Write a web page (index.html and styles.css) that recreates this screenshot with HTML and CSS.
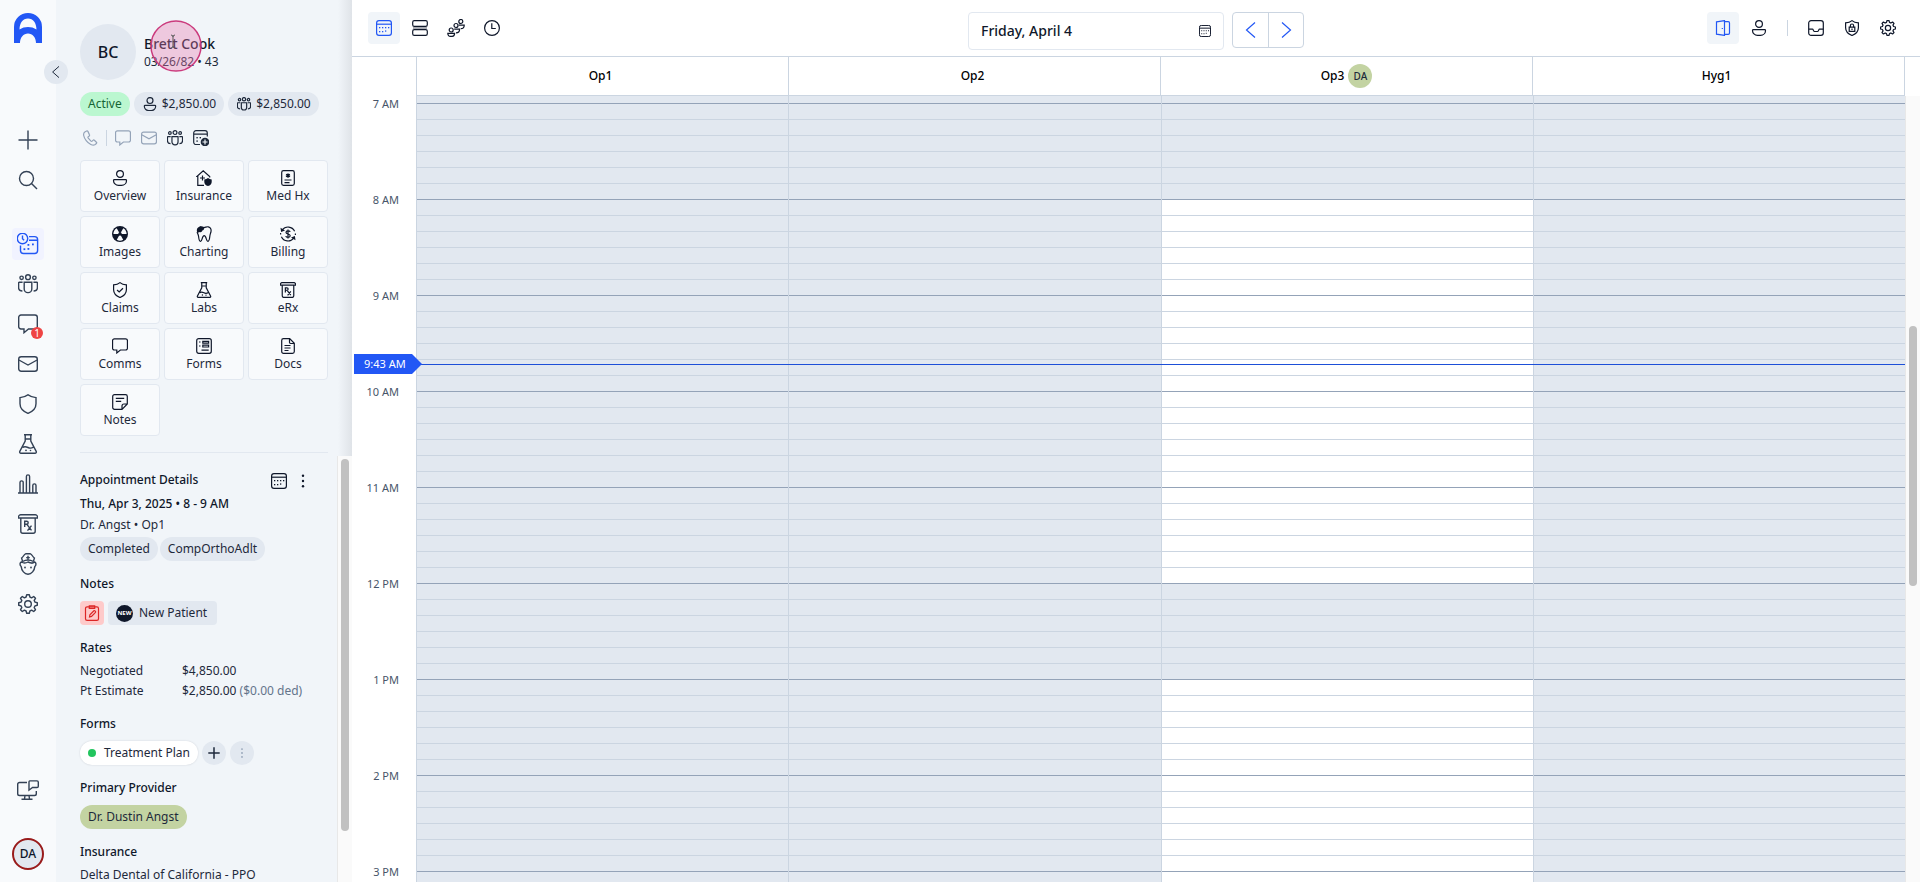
FILE: index.html
```html
<!DOCTYPE html>
<html lang="en">
<head>
    <meta charset="UTF-8">
    <meta name="viewport" content="width=device-width, initial-scale=1.0">
    <title>Schedule</title>
    <link rel="stylesheet" href="styles.css">
</head>
<body>
    <!-- Shared icons -->
    <svg class="sprite" aria-hidden="true">
        <symbol id="i-plus" viewBox="0 0 20 20"><path d="M10 .5v19M.5 10h19"/></symbol>
        <symbol id="i-search" viewBox="0 0 20 20"><circle cx="8.5" cy="8.5" r="7"/><path d="M13.5 13.5l5.5 5.5"/></symbol>
        <symbol id="i-calendar" viewBox="0 0 16 16"><rect x=".6" y=".6" width="14.8" height="14.8" rx="2.4"/><path d="M.6 4.2h14.8"/><g class="fill"><rect x="6" y="7" width="1.3" height="1.3"/><rect x="9" y="7" width="1.3" height="1.3"/><rect x="12" y="7" width="1.3" height="1.3"/><rect x="3" y="7" width="1.3" height="1.3"/><rect x="3" y="11" width="1.3" height="1.3"/><rect x="6" y="11" width="1.3" height="1.3"/><rect x="9" y="10.4" width="1.3" height="1.3"/></g></symbol>
        <symbol id="i-calendar-clock" viewBox="0 0 22 22"><circle cx="5.5" cy="5.5" r="5.2"/><path d="M5.5 2.5v3.2l1.6 1.6M12 3.600h5.600a3 3 0 0 1 3 3V17.500a3 3 0 0 1-3 3H6.500a3 3 0 0 1-3-3v-5M12 7.200h8.600"/><g class="fill"><rect x="10.500" y="11" width="1.800" height="1.800"/><rect x="15" y="10.500" width="1.800" height="1.800"/><rect x="6.500" y="15.300" width="1.800" height="1.800"/><rect x="10.500" y="15" width="1.800" height="1.800"/></g></symbol>
        <symbol id="i-group" viewBox="0 0 20 20"><circle cx="10" cy="3.2" r="2.4"/><circle cx="3.600" cy="3.800" r="1.700"/><circle cx="16.400" cy="3.800" r="1.700"/><path d="M6.200 8.200h7.600V15a3.600 3.600 0 0 1-3.600 3.600h-.4A3.600 3.600 0 0 1 6.200 15zM4.600 8.200H1.200c-.4 0-.6.300-.6.700v4.600c0 2.200 1.400 3.500 3.800 3.500M15.400 8.200h3.400c.4 0 .6.300.6.700v4.600c0 2.200-1.400 3.500-3.800 3.500"/></symbol>
        <symbol id="i-chat" viewBox="0 0 20 20"><path d="M3 1h14a2.300 2.300 0 0 1 2.300 2.300v9.400A2.300 2.300 0 0 1 17 15h-6.500L6 18.700V15H3A2.300 2.300 0 0 1 .7 12.700V3.300A2.300 2.300 0 0 1 3 1z"/></symbol>
        <symbol id="i-mail" viewBox="0 0 20 20"><rect x=".7" y="2.700" width="18.600" height="14.600" rx="2.500"/><path d="M.9 6l9.100 5 9.100-5"/></symbol>
        <symbol id="i-shield" viewBox="0 0 20 20"><path d="M10 .8c2 1.700 4.600 2.600 8 2.800v6.200c0 4.400-3 7.600-8 9.600-5-2-8-5.200-8-9.600V3.600C5.400 3.400 8 2.500 10 .8z"/></symbol>
        <symbol id="i-shield-check" viewBox="0 0 20 20"><path d="M10 .8c2 1.700 4.600 2.600 8 2.800v6.200c0 4.400-3 7.600-8 9.600-5-2-8-5.200-8-9.600V3.600C5.400 3.400 8 2.500 10 .8zM6.300 10l2.700 2.500 4.700-4.700"/></symbol>
        <symbol id="i-shield-lock" viewBox="0 0 20 20"><path d="M10 .8c2 1.700 4.600 2.600 8 2.800v6.200c0 4.400-3 7.600-8 9.600-5-2-8-5.200-8-9.600V3.600C5.400 3.400 8 2.500 10 .8z"/><rect x="6.500" y="9" width="7" height="5.200"/><path d="M8 9V7a2 2 0 0 1 4 0v2M10 10.500v2"/></symbol>
        <symbol id="i-flask" viewBox="0 0 20 20"><path d="M6 .8h8M7.400 5h5.200M7.200.8v6.400L1.800 17.400c-.5 1 .1 1.900 1.200 1.900h14c1.100 0 1.700-.9 1.200-1.900L12.800 7.200V.8M4.600 13.500c2-1.500 3.400-1 5.400 0s3.600.8 5.400-.4"/><g class="fill"><circle cx="8" cy="16.300" r=".9"/><circle cx="12.500" cy="16.500" r=".8"/></g></symbol>
        <symbol id="i-bars" viewBox="0 0 20 20"><path d="M0 19h20M2 19V8.500a1.600 1.600 0 0 1 3.200 0V19M8.400 19V2.500a1.600 1.600 0 0 1 3.200 0V19M14.800 19v-7.500a1.600 1.600 0 0 1 3.200 0V19"/></symbol>
        <symbol id="i-rx" viewBox="0 0 20 20"><path d="M.5 4V3A2.300 2.300 0 0 1 2.800.7h14.400A2.300 2.300 0 0 1 19.500 3v1zM2.800 4v13.200c0 1.200.8 2.100 2 2.100h10.400c1.200 0 2-.9 2-2.100V4M6.700 13V7.300h2a1.500 1.500 0 0 1 0 3h-2M8.900 10.400l4.600 6M13.500 11.600l-4 5"/></symbol>
        <symbol id="i-nurse" viewBox="0 0 20 22"><path d="M4.600 8.500L3.600 5c2-1.200 2.200-3.700 4-4.200h4.800c1.800.5 2 3 4 4.200l-1 3.500M4.600 8.500c3.500-2 7.300-2 10.800 0M10 2.800v3.600M8.200 4.600h3.600M3.400 9c-1.600.8-2 2.600-.2 4.600.3 4 3.300 7.600 6.800 7.600s6.500-3.600 6.800-7.600c1.800-2 1.400-3.800-.2-4.600-2.200 1.900-3.800 1.200-6.600 0-2.300 1.400-4.400 1.400-6.600 0z"/><g class="fill"><circle cx="7" cy="14.500" r=".9"/><circle cx="13" cy="14.500" r=".9"/></g></symbol>
        <symbol id="i-gear" viewBox="0 0 20 20"><circle cx="10" cy="10" r="3.300"/><path stroke-linejoin="round" d="M8.100 3L8.700.7h2.600l.6 2.300 1.700.8 2.100-1.300 1.800 1.800-1.300 2.100.8 1.700 2.300.6v2.600l-2.300.6-.8 1.700 1.300 2.100-1.800 1.800-2.100-1.300-1.700.8-.6 2.300H8.700L8.100 17l-1.700-.8-2.100 1.300-1.800-1.800 1.300-2.100L3 11.900l-2.300-.6V8.700L3 8.100l.8-1.700-1.300-2.100 1.800-1.800 2.100 1.300z"/></symbol>
        <symbol id="i-monitor" viewBox="0 0 22 20"><path d="M10 2.500H2.500A1.800 1.800 0 0 0 .7 4.300v9.400c0 1 .8 1.800 1.800 1.800h15c1 0 1.800-.8 1.800-1.800V11M8 15.500l-.5 3.500M12 15.500l.5 3.500M4.500 19.200h11M12.800.9h7.200c.8 0 1.300.5 1.300 1.300v4c0 .8-.5 1.300-1.300 1.300h-4.500L12 10.200V2.200c0-.8.2-1.300.8-1.300z"/></symbol>
        <symbol id="i-person" viewBox="0 0 16 16"><circle cx="8" cy="4" r="3.400"/><path d="M2.400 9.600h11.200c.6 0 .9.300.9.800 0 2.800-2.200 5-5 5h-3c-2.800 0-5-2.200-5-5 0-.5.300-.8.900-.8z"/></symbol>
        <symbol id="i-phone" viewBox="0 0 16 16"><path d="M4.600 1L2.800 2C.8 3.400 1.400 7 4.200 10.600S10.800 16 12.800 14.800l1.600-1.300c.4-.4.4-.9 0-1.300l-2-1.900c-.5-.4-1-.4-1.400 0l-.8.8c-.5.4-1 .3-1.500-.2L6.300 8.200c-.5-.6-.5-1.100 0-1.500l.9-.7c.4-.4.5-.9.2-1.400L5.900 1.400C5.600.9 5.100.8 4.600 1z"/></symbol>
        <symbol id="i-calendar-plus" viewBox="0 0 16 16"><path d="M7 14.500H3A2.300 2.300 0 0 1 .7 12.200V3A2.300 2.300 0 0 1 3 .7h9A2.300 2.300 0 0 1 14.300 3v3.500M.7 4.200h13.600"/><g class="fill"><rect x="3.400" y="7" width="1.400" height="1.400"/><rect x="6.600" y="7" width="1.400" height="1.400"/><rect x="3.400" y="10.400" width="1.400" height="1.400"/><circle cx="12" cy="12" r="4.300"/></g><path class="knock" d="M12 9.500v5M9.500 12h5"/></symbol>
        <symbol id="i-house" viewBox="0 0 16 16"><path d="M8 15.300H1.800V6.500H.8L7.200.9l6.500 5.600v1M6.500 5.500v5M4 8h5"/><path class="fill" d="M12 8c1.200.9 2.300 1.300 3.700 1.400v2.500c0 2-1.300 3.300-3.700 4.100-2.400-.8-3.700-2.100-3.700-4.100V9.400C9.700 9.300 10.800 8.900 12 8z"/></symbol>
        <symbol id="i-medhx" viewBox="0 0 16 16"><rect x="1.700" y=".7" width="12.600" height="14.600" rx="1.800"/><path d="M4.500 10h7M4.500 12.600h5"/><path d="M8 3.500v4.200M6 4.500l4 2.200M10 4.500L6 6.700" stroke-width="1.500"/></symbol>
        <symbol id="i-xray" viewBox="0 0 16 16"><circle class="fill" cx="8" cy="8" r="8"/><path class="blank" d="M8 8l3.200 5.800a6.600 6.600 0 0 1-6.400 0zM8 8l3.300-5.700A6.600 6.600 0 0 1 14.600 8zM8 8L4.700 2.300A6.600 6.600 0 0 0 1.400 8z"/><circle class="fill" cx="8" cy="8" r="1.800"/></symbol>
        <symbol id="i-tooth" viewBox="0 0 16 16"><path d="M3.800.8C5.600.4 6.500 1.600 8 1.600S10.600.4 12.300.8c2.400.6 3.200 2.900 2.600 5.200-.4 1.600-.9 2.600-1.100 4.500-.2 2-.5 4.600-1.900 4.800-1.800.2-1.400-5.600-3.700-5.600-2.400 0-1.800 5.800-3.700 5.600-1.500-.2-1.700-2.800-1.900-4.800C2.400 8.600 1.500 7.600 1.100 6"/><path class="fill" d="M4 .5c2-.3 3 1 4 1.300.7 1.500-.6 2.500-1.700 2.700-.2 1.600-1.700 2-2.800 1.500C2.600 6.900 1.400 6.700 1 6 .3 3.200 1.600.9 4 .5z"/></symbol>
        <symbol id="i-billing" viewBox="0 0 16 16"><path d="M2.300 3.900A7.200 7.200 0 0 1 14.600 5.200M13.700 12.100A7.200 7.200 0 0 1 1.400 10.800M.6 7v1.500M15.400 7.500V9M10.200 5.900C9.700 4.500 6 4.400 6 6.400s4.200 1.200 4.200 3.300-3.900 2-4.500.4M8 3.500v9"/><path class="fill" d="M.5 1.800l.6 4.300 3.900-1.600zM15.500 14.200l-.6-4.300-3.900 1.600z"/></symbol>
        <symbol id="i-form" viewBox="0 0 16 16"><rect x=".7" y=".7" width="14.600" height="14.600" rx="2"/><path d="M3 4h1.500M3 8h1.500M6.800 3.300h5.800v1.800H6.800zM6.800 7.200h5.800V9H6.800zM5.500 12.200h7.200"/></symbol>
        <symbol id="i-doc" viewBox="0 0 16 16"><path d="M3.500.7h6.200l4.600 4.600v8.200c0 1-.8 1.800-1.800 1.800h-9c-1 0-1.800-.8-1.800-1.800v-11C1.700 1.500 2.500.7 3.500.7zM9.500.9v3.400c0 .8.400 1.200 1.200 1.200h3.400M4.500 7.500h6M4.500 10h6M4.500 12.500h4"/></symbol>
        <symbol id="i-note" viewBox="0 0 16 16"><path d="M10 15.300H2.500C1.500 15.300.7 14.500.7 13.500v-11c0-1 .8-1.800 1.800-1.800h11c1 0 1.800.8 1.800 1.800V10zM10 15.300V12c0-1.300.7-2 2-2h3.300M3.800 4.300h8.400M3.800 7.300h5.400"/></symbol>
        <symbol id="i-dots" viewBox="0 0 16 16"><g class="fill"><circle cx="8" cy="2.800" r="1.200"/><circle cx="8" cy="8" r="1.200"/><circle cx="8" cy="13.200" r="1.200"/></g></symbol>
        <symbol id="i-clipboard" viewBox="0 0 16 16"><rect x="1.500" y="1.800" width="13" height="13.500" rx="1.600"/><path d="M5.300.8h5.400v2.500H5.300zM5.500 12l.4-2.200 4-4c.8-.6 2.200.8 1.600 1.600l-4 4z"/></symbol>
        <symbol id="i-rows" viewBox="0 0 16 16"><rect x=".7" y=".7" width="14.600" height="5.600" rx="1.600"/><rect x=".7" y="9.700" width="14.600" height="5.600" rx="1.600"/><path d="M1 8h14" opacity=".6"/></symbol>
        <symbol id="i-queue" viewBox="0 0 18 18"><circle cx="13.800" cy="2.500" r="2"/><circle cx="9" cy="6.500" r="2"/><circle cx="4.200" cy="11" r="2"/><path d="M.8 14.300h6.800c0 2-1.200 3-2.400 3h-2c-1.200 0-2.400-1-2.400-3zM7.200 10.200h5.400c0 2.300-1.200 3.600-3.600 3.600M11.700 6.200h5.500c0 2.300-1 3.500-3.400 3.500"/></symbol>
        <symbol id="i-clock" viewBox="0 0 16 16"><circle cx="8" cy="8" r="7.400"/><path d="M7.800 3.200v5.300h4"/></symbol>
        <symbol id="i-door" viewBox="0 0 16 16"><path d="M1.500 1.800l8-1.200v14.800l-8-1.200zM9.500 1.600h3.700c.8 0 1.300.5 1.300 1.300v10.200c0 .8-.5 1.300-1.300 1.300H9.500M6.700 8.500h1.200"/></symbol>
        <symbol id="i-inbox" viewBox="0 0 16 16"><rect x=".7" y=".7" width="14.600" height="14.600" rx="2.400"/><path d="M.7 9.200h3.800c.8 0 1 2.300 2 2.300h3c1 0 1.200-2.300 2-2.300h3.800"/></symbol>
        <symbol id="i-left" viewBox="0 0 16 16"><path d="M12 .5L3.500 8l8.500 7.500"/></symbol>
        <symbol id="i-right" viewBox="0 0 16 16"><path d="M4 .5L12.500 8 4 15.500"/></symbol>
    </svg>

    <div class="app">
        <nav class="rail" aria-label="Main">
            <a class="logo" href="#" aria-label="Home">
                <svg viewBox="0 0 28 30"><path fill="#2257f5" fill-rule="evenodd" d="M0 30V14a14 14 0 0 1 28 0v16h-6c0-5.500-3.500-9.500-8-9.500S6 24.500 6 30zM5.500 16.500c5-3.300 12-3.300 17 0C22.300 9.800 19.200 5.500 14 5.500S5.700 9.800 5.500 16.500z"/></svg>
            </a>
            <div class="rail-group">
                <button class="icon-btn" aria-label="Add"><svg class="icon icon-lg"><use href="#i-plus"/></svg></button>
                <button class="icon-btn" aria-label="Search"><svg class="icon icon-lg"><use href="#i-search"/></svg></button>
            </div>
            <div class="rail-group rail-main">
                <a class="icon-btn active" href="#" aria-label="Schedule"><svg class="icon icon-xl"><use href="#i-calendar-clock"/></svg></a>
                <a class="icon-btn" href="#" aria-label="Patients"><svg class="icon icon-lg"><use href="#i-group"/></svg></a>
                <a class="icon-btn" href="#" aria-label="Messages"><svg class="icon icon-lg"><use href="#i-chat"/></svg><span class="badge">1</span></a>
                <a class="icon-btn" href="#" aria-label="Mail"><svg class="icon icon-lg"><use href="#i-mail"/></svg></a>
                <a class="icon-btn" href="#" aria-label="Claims"><svg class="icon icon-lg"><use href="#i-shield"/></svg></a>
                <a class="icon-btn" href="#" aria-label="Labs"><svg class="icon icon-lg"><use href="#i-flask"/></svg></a>
                <a class="icon-btn" href="#" aria-label="Reports"><svg class="icon icon-lg"><use href="#i-bars"/></svg></a>
                <a class="icon-btn" href="#" aria-label="eRx"><svg class="icon icon-lg"><use href="#i-rx"/></svg></a>
                <a class="icon-btn" href="#" aria-label="Hygiene"><svg class="icon icon-xl"><use href="#i-nurse"/></svg></a>
                <a class="icon-btn" href="#" aria-label="Settings"><svg class="icon icon-lg"><use href="#i-gear"/></svg></a>
            </div>
            <div class="rail-bottom">
                <button class="icon-btn" aria-label="Devices"><svg class="icon icon-xl"><use href="#i-monitor"/></svg></button>
                <button class="user">DA</button>
            </div>
        </nav>

        <aside class="panel">
            <button class="collapse" aria-label="Collapse"><svg class="icon icon-sm"><use href="#i-left"/></svg></button>
            <div class="panel-top">
                <div class="patient">
                    <div class="avatar">BC</div>
                    <div>
                        <h1 class="patient-name">Brett Cook</h1>
                        <p class="patient-info">03/26/82 • 43</p>
                    </div>
                    <svg class="pointer" viewBox="0 0 52 52" aria-hidden="true">
                        <circle cx="26" cy="26" r="25" fill="#e879b0" fill-opacity=".36" stroke="#cb3b7d" stroke-width="1.5"/>
                        <path d="M21 15q2 0 2 2v9q0 2-2 2M25 15q-2 0-2 2M25 28q-2 0-2-2" fill="none" stroke="#555"/>
                    </svg>
                </div>
                <div class="balances">
                    <span class="pill pill-active">Active</span>
                    <span class="pill"><svg class="icon"><use href="#i-person"/></svg>$2,850.00</span>
                    <span class="pill"><svg class="icon"><use href="#i-group"/></svg>$2,850.00</span>
                </div>
                <div class="contact">
                    <button class="muted" aria-label="Call"><svg class="icon"><use href="#i-phone"/></svg></button>
                    <span class="sep"></span>
                    <button class="muted" aria-label="Text"><svg class="icon"><use href="#i-chat"/></svg></button>
                    <button class="muted" aria-label="Email"><svg class="icon"><use href="#i-mail"/></svg></button>
                    <button aria-label="Family"><svg class="icon"><use href="#i-group"/></svg></button>
                    <button aria-label="Add appointment"><svg class="icon"><use href="#i-calendar-plus"/></svg></button>
                </div>
                <div class="tiles">
                    <button class="tile"><svg class="icon"><use href="#i-person"/></svg>Overview</button>
                    <button class="tile"><svg class="icon"><use href="#i-house"/></svg>Insurance</button>
                    <button class="tile"><svg class="icon"><use href="#i-medhx"/></svg>Med Hx</button>
                    <button class="tile"><svg class="icon"><use href="#i-xray"/></svg>Images</button>
                    <button class="tile"><svg class="icon"><use href="#i-tooth"/></svg>Charting</button>
                    <button class="tile"><svg class="icon"><use href="#i-billing"/></svg>Billing</button>
                    <button class="tile"><svg class="icon"><use href="#i-shield-check"/></svg>Claims</button>
                    <button class="tile"><svg class="icon"><use href="#i-flask"/></svg>Labs</button>
                    <button class="tile"><svg class="icon"><use href="#i-rx"/></svg>eRx</button>
                    <button class="tile"><svg class="icon"><use href="#i-chat"/></svg>Comms</button>
                    <button class="tile"><svg class="icon"><use href="#i-form"/></svg>Forms</button>
                    <button class="tile"><svg class="icon"><use href="#i-doc"/></svg>Docs</button>
                    <button class="tile"><svg class="icon"><use href="#i-note"/></svg>Notes</button>
                </div>
            </div>

            <div class="details">
                <div class="details-body">
                    <section>
                        <div class="details-head">
                            <h2>Appointment Details</h2>
                            <button aria-label="Open in schedule"><svg class="icon"><use href="#i-calendar"/></svg></button>
                            <button aria-label="More"><svg class="icon"><use href="#i-dots"/></svg></button>
                        </div>
                        <p class="strong">Thu, Apr 3, 2025 • 8 - 9 AM</p>
                        <p>Dr. Angst • Op1</p>
                        <div class="tags">
                            <span class="pill">Completed</span>
                            <span class="pill">CompOrthoAdlt</span>
                        </div>
                    </section>
                    <section>
                        <h2>Notes</h2>
                        <div class="chips">
                            <button class="note-alert" aria-label="Note"><svg class="icon"><use href="#i-clipboard"/></svg></button>
                            <span class="chip"><span class="new">NEW</span>New Patient</span>
                        </div>
                    </section>
                    <section>
                        <h2>Rates</h2>
                        <dl class="rates">
                            <dt>Negotiated</dt>
                            <dd>$4,850.00</dd>
                            <dt>Pt Estimate</dt>
                            <dd>$2,850.00 <span class="ded">($0.00 ded)</span></dd>
                        </dl>
                    </section>
                    <section>
                        <h2>Forms</h2>
                        <div class="chips">
                            <button class="pill pill-form"><span class="dot"></span>Treatment Plan</button>
                            <button class="round" aria-label="Add form"><svg class="icon icon-sm"><use href="#i-plus"/></svg></button>
                            <button class="round muted" aria-label="More"><svg class="icon icon-sm"><use href="#i-dots"/></svg></button>
                        </div>
                    </section>
                    <section>
                        <h2>Primary Provider</h2>
                        <div class="chips">
                            <span class="pill pill-provider">Dr. Dustin Angst</span>
                        </div>
                    </section>
                    <section>
                        <h2>Insurance</h2>
                        <p>Delta Dental of California - PPO</p>
                    </section>
                </div>
                <div class="scrollbar"><div class="thumb" style="top: 0.7%; height: 87.4%"></div></div>
            </div>
        </aside>

        <main class="main">
            <header class="toolbar">
                <div class="tools">
                    <button class="icon-btn active" aria-label="Day view"><svg class="icon"><use href="#i-calendar"/></svg></button>
                    <button class="icon-btn" aria-label="List view"><svg class="icon"><use href="#i-rows"/></svg></button>
                    <button class="icon-btn" aria-label="Waitlist"><svg class="icon icon-md"><use href="#i-queue"/></svg></button>
                    <button class="icon-btn" aria-label="History"><svg class="icon"><use href="#i-clock"/></svg></button>
                </div>
                <div class="date-nav">
                    <label class="date-field">
                        <input type="text" value="Friday, April 4" aria-label="Date">
                        <svg class="icon icon-sm"><use href="#i-calendar"/></svg>
                    </label>
                    <div class="stepper">
                        <button aria-label="Previous day"><svg class="icon"><use href="#i-left"/></svg></button>
                        <button aria-label="Next day"><svg class="icon"><use href="#i-right"/></svg></button>
                    </div>
                </div>
                <div class="tools tools-right">
                    <button class="icon-btn active" aria-label="Operatories"><svg class="icon"><use href="#i-door"/></svg></button>
                    <button class="icon-btn" aria-label="Providers"><svg class="icon"><use href="#i-person"/></svg></button>
                    <span class="sep"></span>
                    <button class="icon-btn" aria-label="Inbox"><svg class="icon"><use href="#i-inbox"/></svg></button>
                    <button class="icon-btn" aria-label="Security"><svg class="icon"><use href="#i-shield-lock"/></svg></button>
                    <button class="icon-btn" aria-label="Settings"><svg class="icon"><use href="#i-gear"/></svg></button>
                </div>
            </header>

            <div class="columns-head">
                <div class="column-title"><span class="column-name">Op1</span></div>
                <div class="column-title"><span class="column-name">Op2</span></div>
                <div class="column-title"><span class="column-name">Op3</span><span class="provider">DA</span></div>
                <div class="column-title"><span class="column-name">Hyg1</span></div>
            </div>

            <div class="schedule">
                <div class="grid">
                    <div class="times">
                        <div class="time">7 AM</div>
                        <div class="time">8 AM</div>
                        <div class="time">9 AM</div>
                        <div class="time">10 AM</div>
                        <div class="time">11 AM</div>
                        <div class="time">12 PM</div>
                        <div class="time">1 PM</div>
                        <div class="time">2 PM</div>
                        <div class="time">3 PM</div>
                    </div>
                    <div class="column" data-open=""></div>
                    <div class="column" data-open=""></div>
                    <div class="column" data-open="8,9,10,11,13,14,15"></div>
                    <div class="column" data-open=""></div>
                    <div class="now"><span class="now-label">9:43 AM</span></div>
                </div>
                <div class="scrollbar"><div class="thumb" style="top: 29.2%; height: 33.2%"></div></div>
            </div>
        </main>
    </div>

    <script>
        // Fill each operatory with hour blocks, open hours are white
        document.querySelectorAll('.column').forEach(column => {
            const open = column.dataset.open.split(',');
            for (let hour = 6; hour <= 15; hour++) {
                const block = document.createElement('div');
                block.className = 'hour';
                if (hour === 6) block.classList.add('partial');
                if (open.includes(String(hour))) block.classList.add('open');
                column.appendChild(block);
            }
        });
    </script>
</body>
</html>
```
FILE: styles.css
```css
* {
    margin: 0;
    padding: 0;
    box-sizing: border-box;
}

body {
    font-family: "Noto Sans", "Open Sans", sans-serif;
    font-size: 12px;
    line-height: 20px;
    color: #334155;
    background: #fff;
}

button,
input {
    font: inherit;
    color: inherit;
    background: none;
    border: none;
}

button {
    cursor: pointer;
}

a {
    color: inherit;
    text-decoration: none;
}

.sprite {
    display: none;
}

symbol * {
    vector-effect: non-scaling-stroke;
}

.icon {
    width: 16px;
    height: 16px;
    flex: none;
    display: block;
    fill: none;
    stroke: currentColor;
    stroke-width: 1.2;
    overflow: visible;
}

.icon-sm {
    width: 12px;
    height: 12px;
    stroke-width: 1;
}

.icon-md {
    width: 18px;
    height: 18px;
}

.icon-lg {
    width: 20px;
    height: 20px;
    stroke-width: 1.4;
}

.icon-xl {
    width: 22px;
    height: 22px;
    stroke-width: 1.4;
}

.fill {
    fill: currentColor;
    stroke: none;
}

.blank {
    fill: #f8fafc;
    stroke: none;
}

.knock {
    stroke: #f1f5f9;
}

.app {
    display: flex;
    height: 100vh;
    overflow: hidden;
}

/* Left rail */
.rail {
    width: 56px;
    flex: none;
    display: flex;
    flex-direction: column;
    align-items: center;
    padding: 13px 0 12px;
    background: #f8fafc;
    color: #334155;
}

.logo svg {
    display: block;
    width: 28px;
    height: 30px;
}

.rail-group {
    display: flex;
    flex-direction: column;
    gap: 8px;
    margin-top: 81px;
}

.rail-main {
    margin-top: 32px;
}

.rail-bottom {
    display: flex;
    flex-direction: column;
    align-items: center;
    gap: 32px;
    margin-top: auto;
}

.icon-btn {
    position: relative;
    display: flex;
    align-items: center;
    justify-content: center;
    width: 32px;
    height: 32px;
    border-radius: 4px;
}

.icon-btn.active {
    background: #f1f5f9;
    color: #2257f5;
}

.rail .icon-btn.active {
    background: #f1f3ff;
}

.badge {
    position: absolute;
    right: 1px;
    bottom: 1px;
    width: 12px;
    height: 12px;
    border-radius: 50%;
    background: #ef4444;
    color: #fff;
    font-size: 10px;
    line-height: 12px;
    text-align: center;
}

.user {
    width: 32px;
    height: 32px;
    border: 2px solid #991b1b;
    border-radius: 50%;
    background: #e2e8f0;
    color: #0f172a;
    font-weight: 500;
}

/* Patient panel */
.panel {
    position: relative;
    width: 296px;
    flex: none;
    display: flex;
    flex-direction: column;
    background: linear-gradient(to left, #dfe3e8, #f1f5f9 14px);
    color: #1e293b;
}

.collapse {
    position: absolute;
    top: 60px;
    left: -12px;
    width: 24px;
    height: 24px;
    display: flex;
    align-items: center;
    justify-content: center;
    border-radius: 50%;
    background: #e2e8f0;
}

.panel-top {
    margin: 0 24px;
    padding: 24px 0 16px;
    border-bottom: 1px solid #e2e8f0;
}

.patient {
    position: relative;
    display: flex;
    align-items: center;
    gap: 8px;
}

.avatar {
    width: 56px;
    height: 56px;
    border-radius: 50%;
    background: #e2e8f0;
    color: #0f172a;
    font-size: 16px;
    line-height: 56px;
    font-weight: 500;
    text-align: center;
}

.patient-name {
    font-size: 14px;
    line-height: 20px;
    font-weight: 500;
    color: #0f172a;
}

.patient-info {
    line-height: 16px;
}

.pointer {
    position: absolute;
    left: 70px;
    top: -4px;
    width: 52px;
    height: 52px;
}

.balances {
    display: flex;
    gap: 4px;
    margin-top: 12px;
}

.pill {
    display: flex;
    align-items: center;
    height: 24px;
    padding: 0 8px;
    border-radius: 12px;
    background: #e2e8f0;
    white-space: nowrap;
}

.pill .icon {
    width: 14px;
    height: 14px;
    margin: 0 5px 0 1px;
}

.pill-active {
    background: #bbf7d0;
    color: #166534;
}

.contact {
    display: flex;
    align-items: center;
    gap: 10px;
    height: 44px;
    padding-left: 2px;
}

.contact .sep {
    margin: 0 -2px;
}

.muted {
    color: #94a3b8;
}

.sep {
    width: 1px;
    height: 16px;
    background: #cbd5e1;
}

.tiles {
    display: grid;
    grid-template-columns: repeat(3, 1fr);
    gap: 4px;
}

.tile {
    display: flex;
    flex-direction: column;
    align-items: center;
    height: 52px;
    padding-top: 9px;
    border: 1px solid #e2e8f0;
    border-radius: 4px;
    background: #f8fafc;
}

.tile .icon {
    color: #0f172a;
}

.details {
    flex: 1;
    display: flex;
    min-height: 0;
    margin-top: 3px;
}

.details-body {
    flex: 1;
    display: flex;
    flex-direction: column;
    gap: 12px;
    padding: 13px 24px;
    overflow: hidden;
}

.details-body section {
    flex: none;
}

.details h2 {
    margin-bottom: 2px;
    font-size: 12px;
    line-height: 22px;
    font-weight: 500;
    color: #0f172a;
}

.details-head {
    display: flex;
    align-items: center;
    gap: 8px;
    padding-right: 2px;
}

.details-head h2 {
    flex: 1;
}

.details-head button {
    color: #0f172a;
}

.strong {
    line-height: 22px;
    font-weight: 500;
    color: #0f172a;
}

.tags {
    display: flex;
    gap: 2px;
    margin-top: 2px;
}

.chips {
    display: flex;
    gap: 4px;
    padding-top: 4px;
}

.note-alert {
    width: 24px;
    height: 24px;
    display: flex;
    align-items: center;
    justify-content: center;
    border-radius: 4px;
    background: #fecaca;
    color: #dc2626;
}

.chip {
    display: flex;
    align-items: center;
    gap: 6px;
    height: 24px;
    padding: 0 10px 0 8px;
    border-radius: 4px;
    background: #e2e8f0;
}

.new {
    width: 17px;
    height: 17px;
    border-radius: 50%;
    background: #0f172a;
    color: #fff;
    font-size: 6px;
    line-height: 17px;
    font-weight: 700;
    text-align: center;
}

.rates {
    display: grid;
    grid-template-columns: 102px 1fr;
}

.ded {
    color: #64748b;
}

.pill-form {
    gap: 8px;
    background: #fff;
    box-shadow: 0 0 2px rgba(15, 23, 42, 0.15);
}

.dot {
    width: 8px;
    height: 8px;
    border-radius: 50%;
    background: #22c55e;
}

.round {
    width: 24px;
    height: 24px;
    display: flex;
    align-items: center;
    justify-content: center;
    border-radius: 50%;
    background: #e2e8f0;
}

.round .icon {
    stroke-width: 1.5;
}

.pill-provider {
    background: #c3d3a2;
}

.scrollbar {
    position: relative;
    width: 15px;
    flex: none;
    border-left: 1px solid #e8e8e8;
    background: #fafafa;
}

.thumb {
    position: absolute;
    left: 3px;
    width: 8px;
    border-radius: 4px;
    background: #c1c1c1;
}

/* Schedule */
.main {
    flex: 1;
    display: flex;
    flex-direction: column;
    min-width: 0;
    background: #fff;
}

.toolbar {
    display: grid;
    grid-template-columns: 1fr auto 1fr;
    align-items: start;
    height: 57px;
    flex: none;
    padding: 12px 16px 0;
    border-bottom: 1px solid #cbd5e1;
    color: #0f172a;
}

.tools {
    display: flex;
    align-items: center;
    gap: 4px;
}

.tools-right {
    justify-content: flex-end;
}

.tools .sep {
    margin: 0 8px;
}

.date-nav {
    display: flex;
    align-items: flex-start;
    gap: 8px;
}

.date-field {
    display: flex;
    align-items: center;
    width: 256px;
    height: 38px;
    padding: 0 12px;
    border: 1px solid #e2e8f0;
    border-radius: 4px;
}

.date-field input {
    flex: 1;
    min-width: 0;
    font-size: 14px;
    font-weight: 500;
    outline: none;
}

.stepper {
    display: flex;
    height: 36px;
    border: 1px solid #cbd5e1;
    border-radius: 4px;
    color: #2257f5;
}

.stepper button {
    width: 35px;
    display: flex;
    align-items: center;
    justify-content: center;
}

.stepper button + button {
    border-left: 1px solid #cbd5e1;
}

.columns-head {
    display: flex;
    height: 39px;
    flex: none;
    padding: 0 15px 0 64px;
}

.column-title {
    flex: 1;
    display: flex;
    align-items: center;
    justify-content: center;
    border-left: 1px solid #cbd5e1;
    border-bottom: 1px solid #cbd5e1;
    color: #000;
    font-weight: 500;
}

.column-title:last-child {
    border-right: 1px solid #cbd5e1;
}

.column-name {
    margin-right: 4px;
}

.provider {
    width: 24px;
    height: 24px;
    border-radius: 50%;
    background: #c3d3a2;
    color: #1e293b;
    font-size: 10px;
    line-height: 24px;
    text-align: center;
}

.schedule {
    flex: 1;
    display: flex;
    min-height: 0;
    overflow: hidden;
}

.grid {
    position: relative;
    flex: 1;
    display: flex;
}

.times {
    width: 64px;
    flex: none;
    padding-right: 17px;
    color: #475569;
    font-size: 11px;
    text-align: right;
}

.time {
    height: 96px;
    line-height: 15px;
}

.column {
    flex: 1;
    border-left: 1px solid #cbd5e1;
}

.hour {
    height: 96px;
    border-bottom: 1px solid #94a3b8;
    background: repeating-linear-gradient(to bottom, transparent 0 15px, #cbd5e1 15px 16px) #e2e8f0;
}

.hour.partial {
    height: 8px;
}

.hour.open {
    background-color: #fff;
}

/* Current time marker */
.now {
    position: absolute;
    top: 268px;
    left: 2px;
    right: 0;
    height: 1px;
    background: #1d4fd8;
}

.now-label {
    position: absolute;
    top: -10px;
    left: 0;
    width: 68px;
    height: 20px;
    padding-left: 10px;
    background: #2257f5;
    clip-path: polygon(0 0, 58px 0, 100% 50%, 58px 100%, 0 100%);
    color: #fff;
    font-size: 11px;
    line-height: 20px;
}
```
